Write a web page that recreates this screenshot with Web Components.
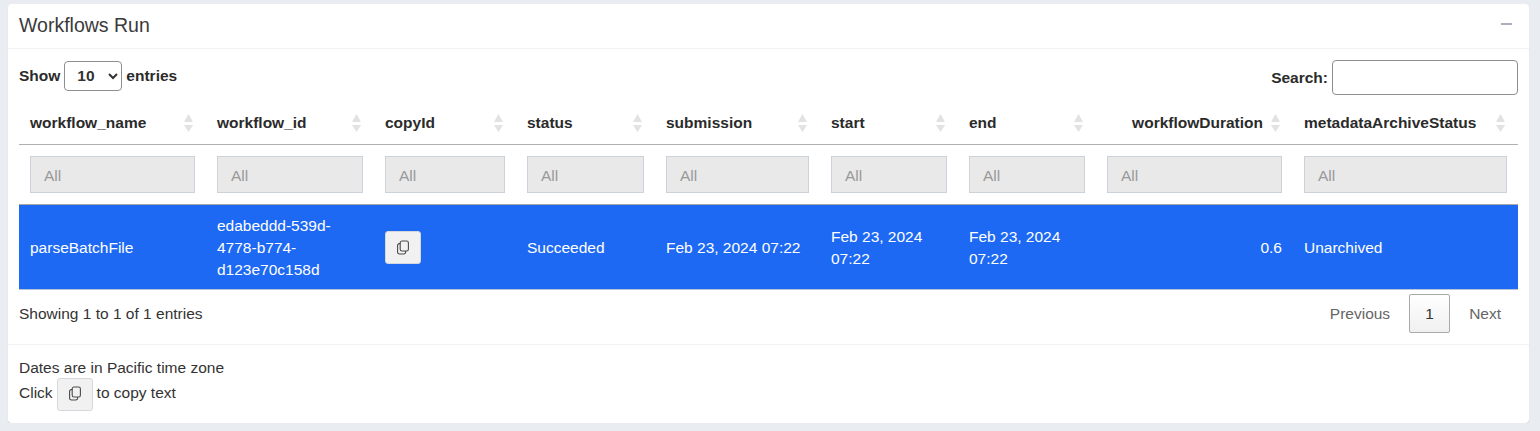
<!DOCTYPE html>
<html>
<head>
<meta charset="utf-8">
<title>Workflows Run</title>
<style>
  html, body { margin: 0; padding: 0; }
  body {
    background: #e9edf1;
    color: #333;
    font: 15.5px/24px "Liberation Sans", Arial, sans-serif;
    padding: 4px 11px 0 8px;
  }
</style>
</head>
<body>

<wf-card heading="Workflows Run">
  <wf-table></wf-table>
  <div slot="footer">
    <div>Dates are in Pacific time zone</div>
    <div style="display:flex;align-items:center;gap:4px;margin-top:-4px">Click <copy-button style="margin-top:2px"></copy-button> to copy text</div>
  </div>
</wf-card>

<script>
class CopyButton extends HTMLElement {
    constructor() {
        super();
        this.shadowDOM = this.attachShadow({mode:'open'});
        this.shadowDOM.innerHTML = `
        <style>
            :host {
                display: inline-flex;
                align-items: center;
                justify-content: center;
                box-sizing: border-box;
                width: 36px;
                height: 33px;
                background: #f1f1f1;
                border: 1px solid #d4d8dd;
                border-radius: 3px;
            }
            svg { display: block; margin-top: -1px; }
        </style>
        <svg width="14" height="15" viewBox="0 0 14 15" fill="none" stroke="#4a4a4a" stroke-width="1.1" stroke-linejoin="round">
            <rect x="4.2" y="1" width="8.2" height="10" rx="1.8"/>
            <path d="M4.2 3.6H3.4A1.8 1.8 0 0 0 1.6 5.4v6.8A1.8 1.8 0 0 0 3.4 14h4.4a1.8 1.8 0 0 0 1.8-1.8V11"/>
        </svg>
        `;
    }
}
customElements.define('copy-button', CopyButton);

class SortIcon extends HTMLElement {
    constructor() {
        super();
        this.attachShadow({mode:'open'}).innerHTML = `
        <style>
            :host { display: block; flex: none; width: 9px; height: 18px; }
            svg { display: block; }
        </style>
        <svg width="9" height="18" viewBox="0 0 9 18" fill="#e2e2e2">
            <path d="M4.5 0 9 8H0z"/>
            <path d="M0 11h9L4.5 18z"/>
        </svg>
        `;
    }
}
customElements.define('sort-icon', SortIcon);

class WfCard extends HTMLElement {
    constructor() {
        super();
        this.shadowDOM = this.attachShadow({mode:'open'});
    }

    connectedCallback() {
        this.shadowDOM.innerHTML = `
        <style>
            :host {
                display: block;
                background: #fff;
                border-radius: 4px;
                box-shadow: 0 1px 1px rgba(0, 0, 0, 0.12);
            }
            header {
                display: flex;
                justify-content: space-between;
                align-items: center;
                height: 44px;
                padding: 0 17px 0 11px;
                border-bottom: 1px solid #f1f2f4;
            }
            h1 {
                margin: 0 0 2px;
                font-size: 19.5px;
                font-weight: 400;
                color: #3a3a3a;
            }
            .minus { width: 11px; height: 2px; margin-bottom: 4px; background: #a9b0bb; }
            .body { padding: 11px 11px 0; }
            footer {
                padding: 11px;
                border-top: 1px solid #f1f2f4;
                height: 56px;
            }
        </style>
        <header>
            <h1>${this.getAttribute('heading')}</h1>
            <div class="minus"></div>
        </header>
        <div class="body"><slot></slot></div>
        <footer><slot name="footer"></slot></footer>
        `;
    }
}
customElements.define('wf-card', WfCard);

class WfTable extends HTMLElement {
    constructor() {
        super();
        this.shadowDOM = this.attachShadow({mode:'open'});
    }

    connectedCallback() {
        const cols = [
            ['workflow_name', 187], ['workflow_id', 168], ['copyId', 142],
            ['status', 139], ['submission', 165], ['start', 138],
            ['end', 138], ['workflowDuration', 197], ['metadataArchiveStatus', 225]
        ];
        const row = [
            'parseBatchFile', 'edabeddd-539d-4778-b774-d123e70c158d', '<copy-button></copy-button>',
            'Succeeded', 'Feb 23, 2024 07:22', 'Feb 23, 2024 07:22',
            'Feb 23, 2024 07:22', '0.6', 'Unarchived'
        ];
        this.shadowDOM.innerHTML = `
        <style>
            :host { display: block; color: #333; }
            * { box-sizing: border-box; }
            .top {
                display: flex;
                justify-content: space-between;
                font-weight: 700;
                height: 41px;
                color: #2b2b2b;
            }
            .top > div { display: flex; align-items: center; gap: 4px; height: 31px; }
            .search { height: 35px !important; }
            select {
                width: 58px;
                height: 30px;
                font: 700 15.5px "Liberation Sans", Arial, sans-serif;
                color: #333;
                padding: 0 0 0 8px;
                background: #fff;
                border: 1px solid #8e8e8e;
                border-radius: 4px;
            }
            .search input {
                width: 186px;
                height: 35px;
                background: #fff;
                border: 1px solid #8e8e8e;
                border-radius: 4px;
            }
            table {
                table-layout: fixed;
                width: 1499px;
                border-collapse: collapse;
            }
            th {
                height: 43px;
                padding: 2px 13px 0 11px;
                text-align: left;
                white-space: nowrap;
                color: #2b2b2b;
                border-bottom: 1px solid #b0b0b0;
            }
            th .in { display: flex; justify-content: space-between; align-items: center; }
            th.num .in { justify-content: flex-end; gap: 8px; }
            td.filter { height: 60px; padding: 0 11px; border-bottom: 1px solid #a8a8a8; }
            .all {
                height: 37px;
                padding-left: 13px;
                line-height: 37px;
                color: #999;
                background: #e9e9e9;
                border: 1px solid #ccd2da;
            }
            tr.sel td {
                height: 85px;
                padding: 2px 11px 0;
                line-height: 22px;
                color: #fff;
                background: #1d69f4;
                border-bottom: 1px solid #b9c4d6;
            }
            tr.sel td.num { text-align: right; }
            .bottom {
                display: flex;
                justify-content: space-between;
                align-items: flex-start;
                height: 54px;
                padding-top: 4px;
            }
            .info { margin-top: 8px; }
            wf-pager { margin-right: 17px; }
        </style>
        <div class="top">
            <div>Show <select><option>10</option></select> entries</div>
            <div class="search">Search: <input type="text"></div>
        </div>
        <table>
            <colgroup>${cols.map(c => `<col style="width:${c[1]}px">`).join('')}</colgroup>
            <thead>
                <tr>${cols.map(c => `<th class="${c[0] === 'workflowDuration' ? 'num' : ''}"><div class="in"><span>${c[0]}</span><sort-icon></sort-icon></div></th>`).join('')}</tr>
                <tr>${cols.map(() => `<td class="filter"><div class="all">All</div></td>`).join('')}</tr>
            </thead>
            <tbody>
                <tr class="sel">${row.map((v, i) => `<td class="${i === 7 ? 'num' : ''}">${v}</td>`).join('')}</tr>
            </tbody>
        </table>
        <div class="bottom">
            <div class="info">Showing 1 to 1 of 1 entries</div>
            <wf-pager></wf-pager>
        </div>
        `;
    }
}
customElements.define('wf-table', WfTable);

class WfPager extends HTMLElement {
    constructor() {
        super();
        this.attachShadow({mode:'open'}).innerHTML = `
        <style>
            :host { display: flex; align-items: center; gap: 19px; color: #666; }
            span { padding-top: 2px; }
            .cur {
                display: flex;
                align-items: center;
                justify-content: center;
                box-sizing: border-box;
                width: 41px;
                height: 39px;
                color: #333;
                border: 1px solid #aaa;
                border-radius: 2px;
                background: linear-gradient(#fff, #f0f0f0);
            }
        </style>
        <span>Previous</span>
        <span class="cur">1</span>
        <span>Next</span>
        `;
    }
}
customElements.define('wf-pager', WfPager);
</script>
</body>
</html>
